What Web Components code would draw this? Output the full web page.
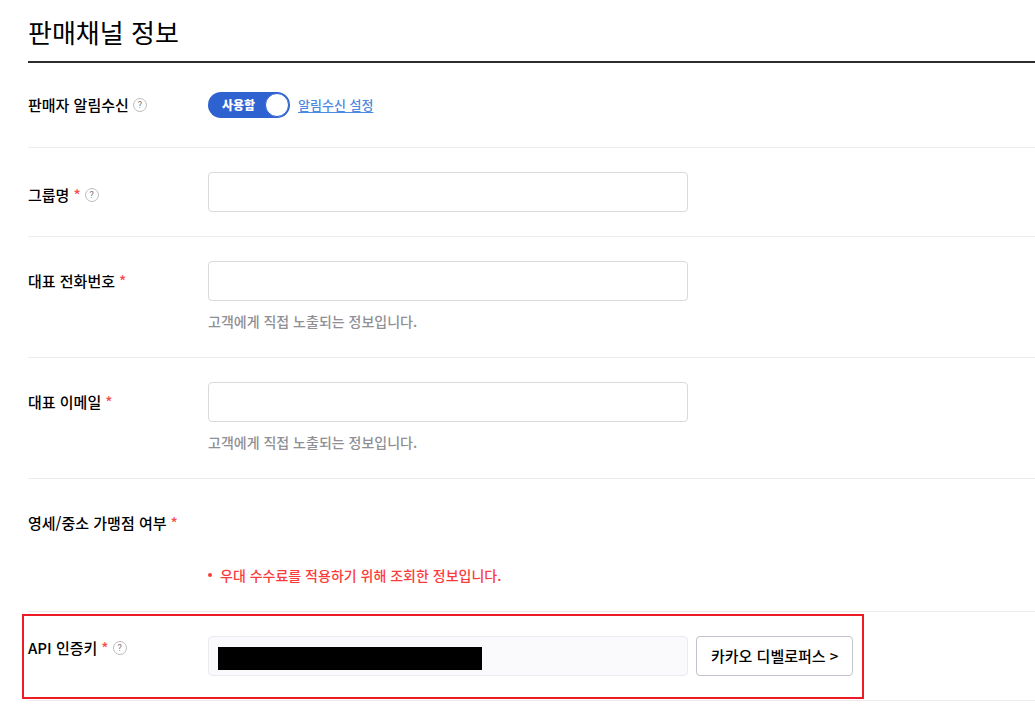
<!DOCTYPE html>
<html lang="ko">
<head>
<meta charset="utf-8">
<meta name="viewport" content="width=device-width, initial-scale=1">
<title>판매채널 정보</title>
<style>
  body {
    margin: 0;
    background: #fff;
    color: #000;
    font-family: "Noto Sans CJK KR", "Noto Sans", sans-serif;
    font-size: 15px;
    line-height: 24px;
  }
</style>
</head>
<body>
<channel-settings></channel-settings>

<script>
function createTemplate(html) {
  const template = document.createElement('template');
  template.innerHTML = html;
  return template;
}

class BaseElement extends HTMLElement {
  constructor() {
    super();
    this.attachShadow({ mode: 'open' });
    this.shadowRoot.appendChild(this.constructor.template.content.cloneNode(true));
  }
}

class HelpTip extends BaseElement {
  static template = createTemplate(`
    <style>
      :host {
        display: inline-flex;
      }
      button {
        box-sizing: border-box;
        display: flex;
        align-items: center;
        justify-content: center;
        width: 14px;
        height: 14px;
        padding: 0;
        border: 1px solid #bdbdc2;
        border-radius: 50%;
        background: #fff;
        color: #77777c;
        font: 9px/12px Roboto, sans-serif;
        cursor: pointer;
      }
    </style>
    <button type="button">?</button>
  `);
}

class FormRow extends BaseElement {
  static template = createTemplate(`
    <style>
      :host {
        position: relative;
        display: grid;
        grid-template-columns: 180px minmax(0, 1fr);
        align-items: start;
        padding: 24px 0;
        border-bottom: 1px solid #ebebeb;
      }
      .label {
        display: flex;
        align-items: center;
        padding-top: 8px;
        font-weight: 500;
      }
      :host([label-align="low"]) .label {
        padding-top: 11px;
      }
      :host([label-align="top"]) .label {
        padding-top: 0;
      }
      :host([label-align="center"]) .label {
        align-self: center;
        padding-top: 0;
      }
      .required, help-tip {
        display: none;
      }
      :host([required]) .required {
        display: inline;
        margin-left: 4px;
        color: #fa4b4b;
      }
      :host([help]) help-tip {
        display: inline-flex;
        margin-left: 4px;
      }
      :host([highlight])::after {
        content: "";
        position: absolute;
        box-sizing: border-box;
        top: 2px;
        bottom: 1px;
        left: -6px;
        width: 842px;
        border: 2px solid #ed1c24;
        pointer-events: none;
      }
    </style>
    <div class="label">
      <slot name="label"></slot>
      <span class="required">*</span>
      <help-tip></help-tip>
    </div>
    <div class="content"><slot></slot></div>
  `);
}

class ToggleSwitch extends BaseElement {
  static template = createTemplate(`
    <style>
      :host {
        display: inline-flex;
      }
      label {
        position: relative;
        box-sizing: border-box;
        display: flex;
        align-items: center;
        justify-content: space-between;
        width: 82px;
        height: 26px;
        padding: 0 1px 0 14px;
        border-radius: 13px;
        background: #9a9aa0;
        color: #fff;
        font-size: 12px;
        font-weight: 900;
        cursor: pointer;
      }
      label:has(input:checked) {
        background: #2e62d1;
      }
      input {
        position: absolute;
        inset: 0;
        width: 100%;
        height: 100%;
        margin: 0;
        opacity: 0;
        cursor: pointer;
      }
      .knob {
        box-sizing: border-box;
        width: 24px;
        height: 24px;
        border: 1px solid #2e62d1;
        border-radius: 50%;
        background: #fff;
      }
      label:has(input:not(:checked)) {
        flex-direction: row-reverse;
        padding: 0 14px 0 1px;
      }
    </style>
    <label>
      <input type="checkbox" role="switch" checked>
      <slot></slot>
      <span class="knob"></span>
    </label>
  `);
}

class FieldNote extends BaseElement {
  static template = createTemplate(`
    <style>
      :host {
        display: block;
        margin-top: 8px;
        color: #8f8f94;
        font-size: 14px;
        font-weight: 500;
      }
      :host([type="alert"]) {
        display: flex;
        align-items: center;
        gap: 8px;
        margin-top: 60px;
        color: #fa3c3c;
      }
      :host([type="alert"])::before {
        content: "";
        width: 4px;
        height: 4px;
        border-radius: 50%;
        background: currentColor;
      }
    </style>
    <slot></slot>
  `);
}

class ChannelSettings extends BaseElement {
  static template = createTemplate(`
    <style>
      :host {
        display: block;
        padding: 14px 0 12px 28px;
      }
      h1 {
        margin: 0;
        padding-bottom: 11px;
        border-bottom: 2px solid #2d2d2d;
        font-size: 26px;
        font-weight: 400;
        line-height: 36px;
      }
      .line {
        display: flex;
        align-items: center;
        gap: 8px;
        min-height: 36px;
      }
      a {
        color: #4a8ae0;
        font-size: 13px;
        font-weight: 500;
        text-underline-offset: 2px;
      }
      input {
        box-sizing: border-box;
        display: block;
        width: 100%;
        max-width: 480px;
        height: 40px;
        padding: 0 10px;
        border: 1px solid #d9d9dc;
        border-radius: 4px;
        background: #fff;
        font: inherit;
      }
      input[readonly] {
        border-color: #ebebed;
        background: #fafafc;
      }
      .secret {
        position: relative;
        flex: 0 1 480px;
      }
      .mask {
        position: absolute;
        top: 11px;
        left: 10px;
        width: 264px;
        height: 23px;
        background: #000;
      }
      .link-button {
        flex: none;
        box-sizing: border-box;
        height: 40px;
        padding: 0 14px;
        border: 1px solid #c3c3cb;
        border-radius: 4px;
        background: #fff;
        color: #000;
        font: inherit;
        font-weight: 500;
        cursor: pointer;
      }
    </style>
    <h1>판매채널 정보</h1>
    <form>
      <form-row label-align="center" help>
        <span slot="label">판매자 알림수신</span>
        <div class="line">
          <toggle-switch>사용함</toggle-switch>
          <a href="#">알림수신 설정</a>
        </div>
      </form-row>
      <form-row label-align="low" required help>
        <label slot="label" for="group">그룹명</label>
        <input id="group" type="text">
      </form-row>
      <form-row required>
        <label slot="label" for="phone">대표 전화번호</label>
        <input id="phone" type="tel">
        <field-note>고객에게 직접 노출되는 정보입니다.</field-note>
      </form-row>
      <form-row required>
        <label slot="label" for="email">대표 이메일</label>
        <input id="email" type="email">
        <field-note>고객에게 직접 노출되는 정보입니다.</field-note>
      </form-row>
      <form-row required>
        <span slot="label">영세/중소 가맹점 여부</span>
        <field-note type="alert">우대 수수료를 적용하기 위해 조회한 정보입니다.</field-note>
      </form-row>
      <form-row label-align="top" required help highlight>
        <label slot="label" for="api-key">API 인증키</label>
        <div class="line">
          <div class="secret">
            <input id="api-key" type="text" readonly>
            <span class="mask"></span>
          </div>
          <button class="link-button" type="button">카카오 디벨로퍼스 &gt;</button>
        </div>
      </form-row>
    </form>
  `);
}

customElements.define('help-tip', HelpTip);
customElements.define('form-row', FormRow);
customElements.define('toggle-switch', ToggleSwitch);
customElements.define('field-note', FieldNote);
customElements.define('channel-settings', ChannelSettings);
</script>
</body>
</html>
